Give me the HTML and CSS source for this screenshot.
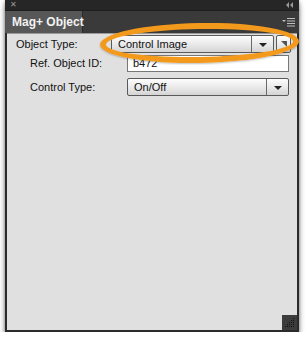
FILE: index.html
```html
<!DOCTYPE html>
<html>
<head>
<meta charset="utf-8">
<link rel="stylesheet" href="styles.css">
</head>
<body>
<div class="panel">
  <div class="titlebar">
    <span class="close">✕</span>
    <svg class="collapse" width="8" height="6" viewBox="0 0 8 6"><path d="M3 0 L0 3 L3 6 Z M7 0 L4 3 L7 6 Z" fill="#9a9a9a"/></svg>
  </div>
  <div class="tabs">
    <div class="tab">Mag+ Object</div>
    <svg class="menu" width="13" height="9" viewBox="0 0 13 9"><path d="M0 2 L4 2 L2 4 Z" fill="#bdbdbd"/><rect x="5" y="0" width="8" height="1" fill="#bdbdbd"/><rect x="5" y="2.5" width="8" height="1" fill="#bdbdbd"/><rect x="5" y="5" width="8" height="1" fill="#bdbdbd"/><rect x="5" y="7.5" width="8" height="1" fill="#bdbdbd"/></svg>
  </div>
  <div class="content">
    <div class="row row1">
      <span class="label l1">Object Type:</span>
      <div class="select s1"><span class="val">Control Image</span><span class="arrow"><i></i></span></div>
      <div class="btn"><svg width="8" height="8" viewBox="0 0 8 8"><path d="M1 1 L7 1 L7 7 Z" fill="#555"/></svg></div>
    </div>
    <div class="row row2">
      <span class="label l2">Ref. Object ID:</span>
      <div class="input">b472</div>
    </div>
    <div class="row row3">
      <span class="label l2">Control Type:</span>
      <div class="select s2"><span class="val">On/Off</span><span class="arrow"><i></i></span></div>
    </div>
    <div class="spacer"></div>
    <div class="grip"><svg width="10" height="10" viewBox="0 0 10 10" fill="#111">
      <rect x="8" y="0" width="1" height="1"/>
      <rect x="6" y="2" width="1" height="1"/><rect x="8" y="2" width="1" height="1"/>
      <rect x="4" y="4" width="1" height="1"/><rect x="6" y="4" width="1" height="1"/><rect x="8" y="4" width="1" height="1"/>
      <rect x="2" y="6" width="1" height="1"/><rect x="4" y="6" width="1" height="1"/><rect x="6" y="6" width="1" height="1"/><rect x="8" y="6" width="1" height="1"/>
      <rect x="0" y="8" width="1" height="1"/><rect x="2" y="8" width="1" height="1"/><rect x="4" y="8" width="1" height="1"/><rect x="6" y="8" width="1" height="1"/><rect x="8" y="8" width="1" height="1"/>
    </svg></div>
  </div>
  <div class="highlight"></div>
</div>
</body>
</html>
```
FILE: styles.css
```css
html, body {
  margin: 0;
  padding: 0;
  background: #ffffff;
}
body {
  font-family: "Liberation Sans", Arial, sans-serif;
  font-size: 11px;
  color: #111;
}
.panel {
  position: relative;
  margin-left: 5px;
  width: 294px;
  height: 332px;
  display: flex;
  flex-direction: column;
  background: #2b2b2b;
  box-shadow: 0 4px 6px rgba(0,0,0,0.45), 0 0 3px rgba(0,0,0,0.3);
  box-sizing: border-box;
}
.titlebar {
  height: 10px;
  background: #262626;
  display: flex;
  align-items: center;
  justify-content: space-between;
  padding: 0 5px 0 5px;
}
.close {
  color: #9a9a9a;
  font-size: 8px;
  line-height: 10px;
}
.tabs {
  height: 23px;
  background: #3a3a3a;
  display: flex;
  align-items: stretch;
  justify-content: space-between;
  border-top: 1px solid #1e1e1e;
  box-sizing: border-box;
}
.tab {
  width: 78px;
  background: #575757;
  color: #f2f2f2;
  font-weight: bold;
  font-size: 12px;
  white-space: nowrap;
  display: flex;
  align-items: center;
  padding-left: 7px;
  box-sizing: border-box;
  border-right: 1px solid #2a2a2a;
}
.menu {
  align-self: center;
  margin-right: 4px;
}
.content {
  flex: 1;
  background: #e0e0e0;
  margin: 0 2px 2px 2px;
  display: flex;
  flex-direction: column;
  border-top: 1px solid #9a9a9a;
}
.row {
  display: flex;
  align-items: center;
}
.row1 {
  margin-top: 1px;
  height: 18px;
}
.row2 {
  margin-top: 2px;
  height: 16px;
}
.row3 {
  margin-top: 7px;
  height: 18px;
}
.label {
  box-sizing: border-box;
  white-space: nowrap;
}
.l1 {
  width: 104px;
  padding-left: 9px;
}
.l2 {
  width: 120px;
  padding-left: 23px;
}
.select {
  height: 18px;
  box-sizing: border-box;
  border: 1px solid #5a5a5a;
  border-radius: 2px;
  background: linear-gradient(#fdfdfd, #e6e6e6 60%, #d4d4d4);
  display: flex;
  align-items: center;
}
.s1 { width: 163px; }
.s2 { width: 162px; }
.val {
  flex: 1;
  padding-left: 6px;
}
.arrow {
  width: 21px;
  height: 100%;
  border-left: 1px solid #6a6a6a;
  display: flex;
  align-items: center;
  justify-content: center;
}
.arrow i {
  width: 0;
  height: 0;
  border-left: 4px solid transparent;
  border-right: 4px solid transparent;
  border-top: 4px solid #222;
  margin-top: 1px;
}
.btn {
  margin-left: 2px;
  width: 15px;
  height: 18px;
  box-sizing: border-box;
  border: 1px solid #5a5a5a;
  border-radius: 2px;
  background: linear-gradient(#fdfdfd, #d8d8d8);
  display: flex;
  align-items: center;
  justify-content: center;
}
.input {
  width: 162px;
  height: 17px;
  box-sizing: border-box;
  border: 1px solid #777;
  background: #fff;
  padding-left: 5px;
  line-height: 15px;
}
.spacer { flex: 1; }
.grip {
  align-self: flex-end;
  width: 15px;
  height: 15px;
  background: #3c3c3c;
  display: flex;
  align-items: flex-end;
  justify-content: flex-end;
  padding: 0 2px 2px 0;
  box-sizing: border-box;
}
.highlight {
  position: absolute;
  left: 95px;
  top: 23px;
  width: 199px;
  height: 40px;
  border: 6px solid #f39a1c;
  border-radius: 50%;
  box-sizing: border-box;
  box-shadow: 0 1px 2px rgba(0,0,0,0.25);
  transform: rotate(-1deg);
  pointer-events: none;
}
```
